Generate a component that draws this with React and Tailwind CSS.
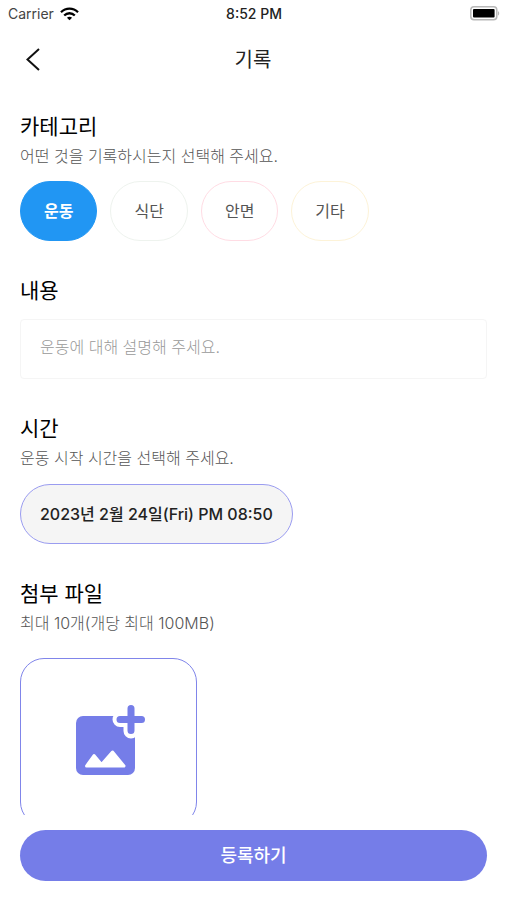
import { useState } from "react";

const categories = [
    { id: "exercise", label: "운동", border: "border-[#2196f3]" },
    { id: "diet", label: "식단", border: "border-[#eef3ee]" },
    { id: "face", label: "안면", border: "border-[#ffdce4]" },
    { id: "etc", label: "기타", border: "border-[#fdf3d8]" },
];

const StatusBar = () => {
    return (
        <div className="grid grid-cols-3 items-center h-[27px] pl-2 pr-[6px] text-sm leading-5 text-[#222222]">
            <div className="flex items-center gap-[6px] text-[#444444]">
                <span>Carrier</span>
                <svg width="19" height="14" viewBox="0 0 19 14" fill="none" stroke="#000000" strokeWidth="2.3" aria-hidden="true">
                    <path d="M1 5.2C5.8 0.5 13.2 0.5 18 5.2" />
                    <path d="M4.2 8.5C7.2 5.5 11.8 5.5 14.8 8.5" />
                    <path d="M9.5 13.2L6.9 10.7C8.3 9.4 10.7 9.4 12.1 10.7Z" fill="#000000" stroke="none" />
                </svg>
            </div>
            <span className="text-center font-medium">8:52 PM</span>
            <svg className="justify-self-end" width="30" height="15" viewBox="0 0 30 15" aria-hidden="true">
                <rect x="0.8" y="0.8" width="26" height="13" rx="3.2" fill="#ffffff" stroke="#b8b8b8" strokeWidth="1.5" />
                <rect x="3" y="3" width="21.6" height="8.6" rx="1" fill="#000000" />
                <path d="M28 5.2C29.6 5.6 29.6 9 28 9.4Z" fill="#b8b8b8" />
            </svg>
        </div>
    );
};

const Header = () => {
    return (
        <header className="grid grid-cols-[1fr_auto_1fr] items-center h-[66px] px-5">
            <button type="button" aria-label="뒤로" className="justify-self-start p-1">
                <svg width="18" height="24" viewBox="0 0 18 24" fill="none" stroke="#111111" strokeWidth="2" aria-hidden="true">
                    <path d="M15 1L3.5 11.5L15 22" />
                </svg>
            </button>
            <h1 className="text-xl text-[#222222]">기록</h1>
        </header>
    );
};

const Section = ({ title, description, children }) => {
    return (
        <section>
            <h2 className="text-[21px] leading-[30px] text-black">{title}</h2>
            {description && (
                <p className="mt-[2px] text-base leading-6 font-light text-[#555555]">{description}</p>
            )}
            {children}
        </section>
    );
};

const AddPhotoIcon = () => {
    return (
        <svg width="72" height="72" viewBox="0 0 72 72" aria-hidden="true">
            <rect x="3" y="12" width="59" height="59" rx="7" fill="#757de8" />
            <path d="M58 5V27M47 15.5H69" fill="none" stroke="#ffffff" strokeWidth="15" strokeLinecap="round" />
            <path d="M58 4.5V26.5M47 15.5H68.5" fill="none" stroke="#757de8" strokeWidth="7" strokeLinecap="round" />
            <path d="M13.5 62L21 51.5L28.5 60.5L39.5 48L51 62Z" fill="#ffffff" stroke="#ffffff" strokeWidth="3" strokeLinejoin="round" />
        </svg>
    );
};

const App = () => {
    const [selected, setSelected] = useState("exercise");
    const [content, setContent] = useState("");

    return (
        <div className="flex flex-col h-screen bg-white font-['Inter','Noto_Sans_CJK_KR',sans-serif]">
            <StatusBar />
            <Header />

            <main className="flex flex-col flex-1 min-h-0 gap-[35px] overflow-hidden pl-5 pr-[19px] pt-[19px]">
                <Section title="카테고리" description="어떤 것을 기록하시는지 선택해 주세요.">
                    <div className="flex gap-[13px] mt-[13px]">
                        {categories.map((category) => (
                            <button
                                key={category.id}
                                type="button"
                                aria-pressed={selected === category.id}
                                onClick={() => setSelected(category.id)}
                                className={`h-[60px] px-[23px] rounded-[30px] border text-base ${category.border} ${
                                    selected === category.id
                                        ? "bg-[#2196f3] text-white font-bold"
                                        : "bg-white text-[#555555]"
                                }`}
                            >
                                {category.label}
                            </button>
                        ))}
                    </div>
                </Section>

                <Section title="내용">
                    <input
                        type="text"
                        aria-label="내용"
                        value={content}
                        onChange={(e) => setContent(e.target.value)}
                        placeholder="운동에 대해 설명해 주세요."
                        className="w-full h-[60px] mt-[13px] px-[19px] pb-1 rounded-sm border border-[#f5f5f5] text-base font-light placeholder:text-[#999999]"
                    />
                </Section>

                <Section title="시간" description="운동 시작 시간을 선택해 주세요.">
                    <button
                        type="button"
                        className="h-[60px] mt-[14px] px-[19px] rounded-[30px] border border-[#9a9cf0] bg-[#f5f5f5] text-base font-medium text-[#222222]"
                    >
                        2023년 2월 24일(Fri) PM 08:50
                    </button>
                </Section>

                <Section title="첨부 파일" description="최대 10개(개당 최대 100MB)">
                    <button
                        type="button"
                        aria-label="파일 추가"
                        className="flex items-center justify-center w-[177px] h-[168px] mt-[23px] pb-1 rounded-3xl border border-[#8085ea]"
                    >
                        <AddPhotoIcon />
                    </button>
                </Section>
            </main>

            <footer className="pl-5 pr-[19px] pt-[15px] pb-[19px]">
                <button
                    type="button"
                    className="w-full h-[51px] rounded-full bg-[#757de8] text-lg font-medium text-white"
                >
                    등록하기
                </button>
            </footer>
        </div>
    );
};

export default App;
